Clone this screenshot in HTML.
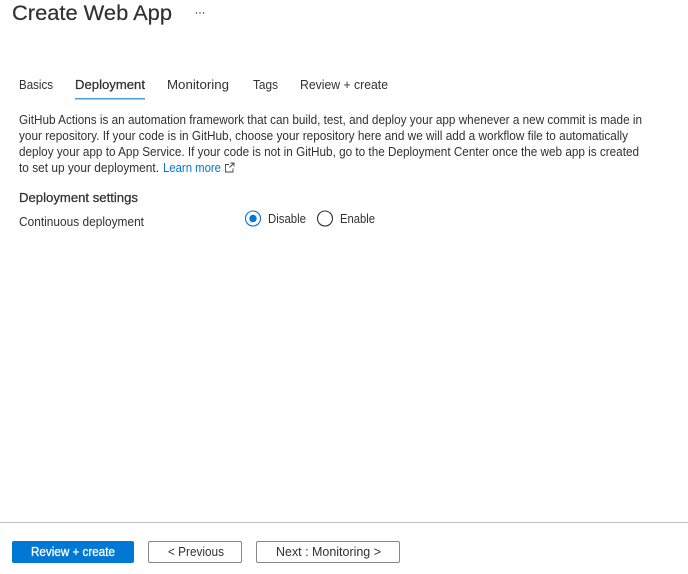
<!DOCTYPE html>
<html>
<head>
<meta charset="utf-8">
<style>
html,body{margin:0;padding:0;background:#fff;width:688px;height:574px;overflow:hidden}
svg{display:block}
text{font-family:"Liberation Sans",sans-serif;fill:#323130;font-size:12.5px}
</style>
</head>
<body>
<svg width="688" height="574" viewBox="0 0 688 574" xmlns="http://www.w3.org/2000/svg">
<rect width="688" height="574" fill="#fff"/>
<text x="12" y="20" style="font-size:21.500px" textLength="160" lengthAdjust="spacingAndGlyphs" stroke="#323130" stroke-width=".2">Create Web App</text>
<circle cx="196.500" cy="13" r=".7" fill="#323130"/><circle cx="200" cy="13" r=".7" fill="#323130"/><circle cx="203.500" cy="13" r=".7" fill="#323130"/>

<text x="19" y="89" textLength="34" lengthAdjust="spacingAndGlyphs">Basics</text>
<text x="75" y="89" textLength="70" lengthAdjust="spacingAndGlyphs" stroke="#323130" stroke-width=".25">Deployment</text>
<text x="167" y="89" textLength="62" lengthAdjust="spacingAndGlyphs">Monitoring</text>
<text x="253" y="89" textLength="25" lengthAdjust="spacingAndGlyphs">Tags</text>
<text x="300" y="89" textLength="88" lengthAdjust="spacingAndGlyphs">Review + create</text>
<rect x="75" y="98" width="70" height="1.500" fill="#4a9fd8"/>

<text x="19" y="124" textLength="623" lengthAdjust="spacingAndGlyphs">GitHub Actions is an automation framework that can build, test, and deploy your app whenever a new commit is made in</text>
<text x="19" y="140" textLength="609" lengthAdjust="spacingAndGlyphs">your repository. If your code is in GitHub, choose your repository here and we will add a workflow file to automatically</text>
<text x="19" y="156" textLength="620" lengthAdjust="spacingAndGlyphs">deploy your app to App Service. If your code is not in GitHub, go to the Deployment Center once the web app is created</text>
<text x="19" y="172" textLength="140" lengthAdjust="spacingAndGlyphs">to set up your deployment.</text>
<text x="163" y="172" textLength="58" lengthAdjust="spacingAndGlyphs" style="fill:#0078d4">Learn more</text>
<path d="M229 164.500h-3.500v7.500h7.500v-3.500M229.500 167.500l4-4M230.500 163h3.500v3.500" fill="none" stroke="#444" stroke-width=".9"/>

<text x="19" y="202" textLength="119" lengthAdjust="spacingAndGlyphs" stroke="#323130" stroke-width=".25">Deployment settings</text>
<text x="19" y="226" textLength="125" lengthAdjust="spacingAndGlyphs">Continuous deployment</text>

<circle cx="253" cy="218.500" r="7.500" fill="#fff" stroke="#0078d4" stroke-width="1.100"/>
<circle cx="253" cy="218.500" r="3.700" fill="#0078d4"/>
<text x="268" y="223" textLength="38" lengthAdjust="spacingAndGlyphs">Disable</text>
<circle cx="325" cy="218.500" r="7.500" fill="#fff" stroke="#323130" stroke-width="1.100"/>
<text x="340" y="223" textLength="35" lengthAdjust="spacingAndGlyphs">Enable</text>

<rect x="0" y="522" width="688" height="1" fill="#bcbcbc"/>

<rect x="12" y="541" width="122" height="22" rx="2" fill="#0078d4"/>
<text x="31" y="556" textLength="84" lengthAdjust="spacingAndGlyphs" style="fill:#fff" stroke="#fff" stroke-width=".3">Review + create</text>
<rect x="148.500" y="541.500" width="93" height="21" rx="1.500" fill="#fff" stroke="#8a8886"/>
<text x="168" y="556" textLength="56" lengthAdjust="spacingAndGlyphs">&lt; Previous</text>
<rect x="256.500" y="541.500" width="143" height="21" rx="1.500" fill="#fff" stroke="#8a8886"/>
<text x="276" y="556" textLength="105" lengthAdjust="spacingAndGlyphs">Next : Monitoring &gt;</text>
</svg>
</body>
</html>
